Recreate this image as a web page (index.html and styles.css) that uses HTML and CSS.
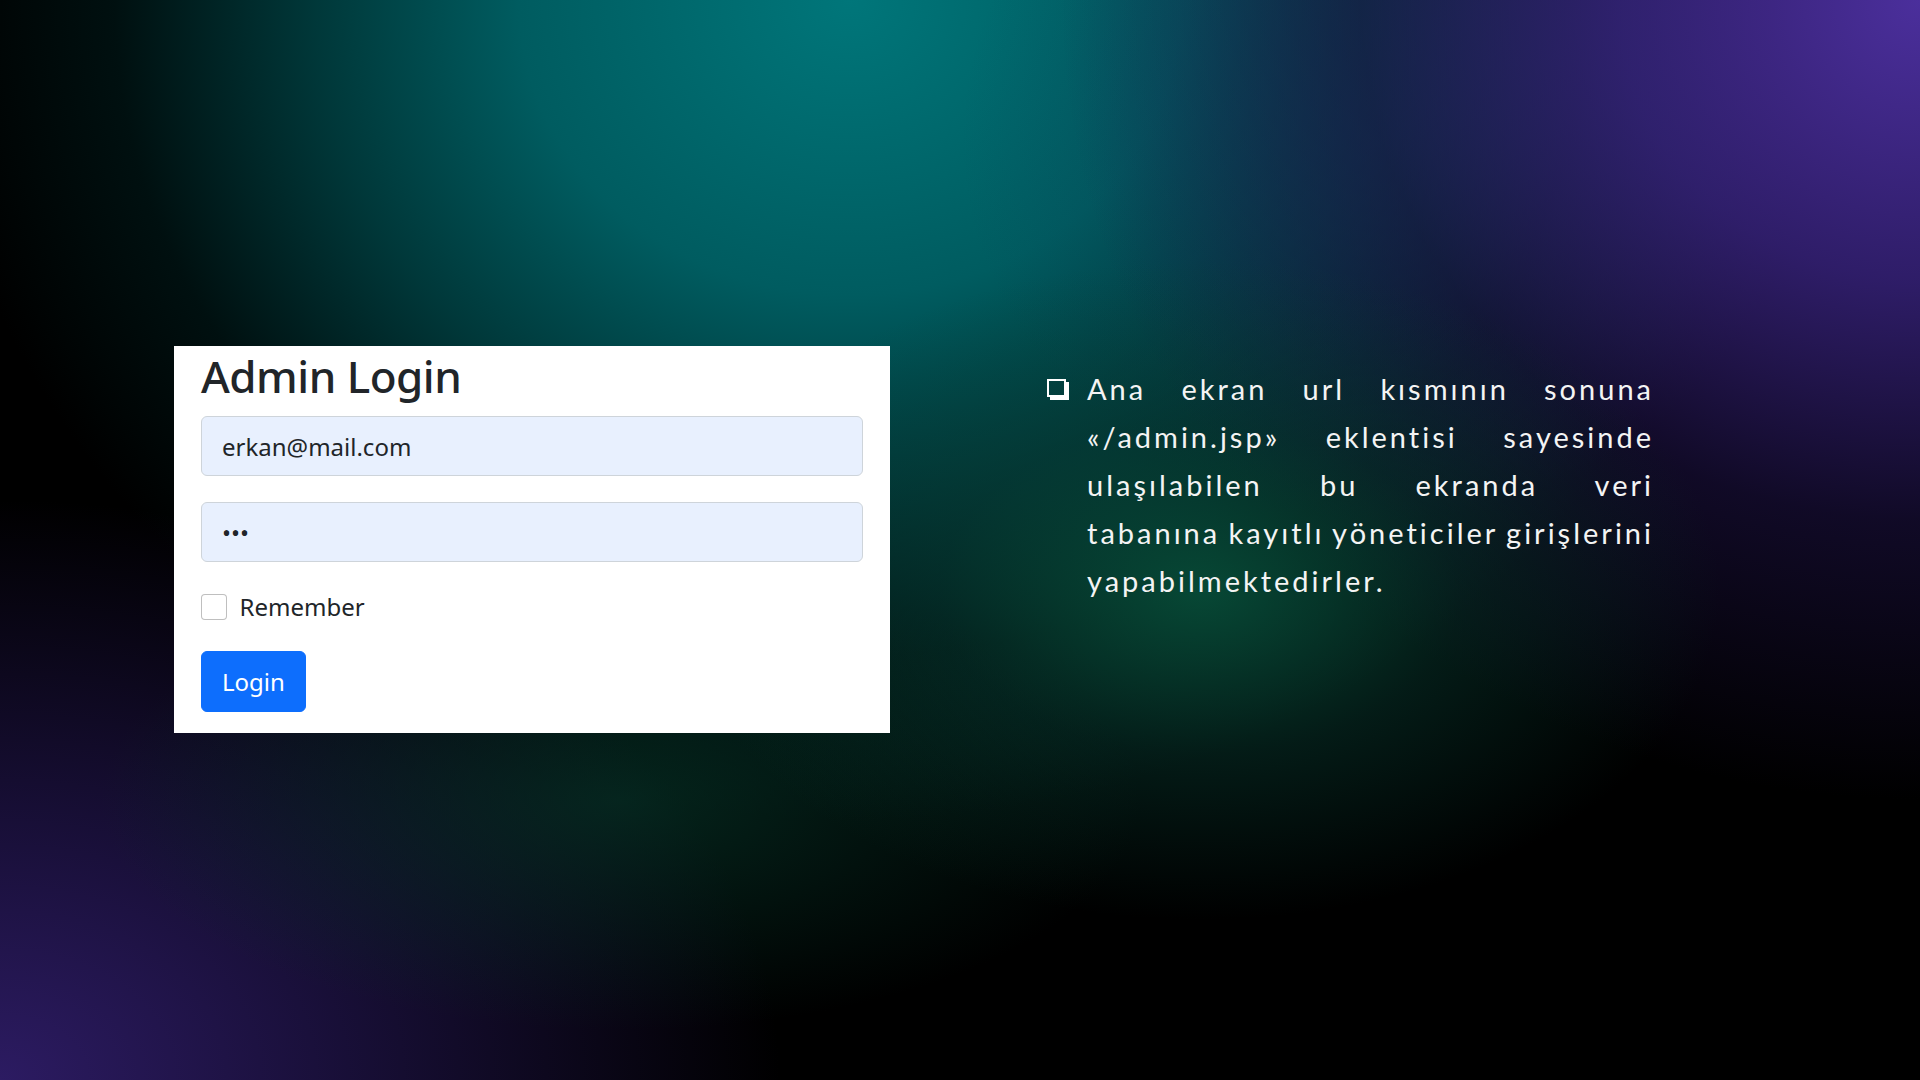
FILE: index.html
```html
<!DOCTYPE html>
<html lang="tr">
<head>
<meta charset="utf-8">
<title>Admin Login</title>
<link rel="stylesheet" href="styles.css">
</head>
<body>
<div class="slide">
  <div class="card">
    <h3 class="title">Admin Login</h3>
    <div class="group"><input class="field" type="text" value="erkan@mail.com"></div>
    <div class="group"><input class="field" type="password" value="abc"></div>
    <div class="check"><input class="box" type="checkbox"><label class="check-label">Remember</label></div>
    <button class="btn">Login</button>
  </div>
  <div class="notes">
    <svg class="bullet" width="23" height="21" viewBox="0 0 23 21">
      <rect x="1" y="1" width="17" height="16" fill="none" stroke="#fff" stroke-width="2"/>
      <polygon points="18,3 22,3 22,21 3,21 3,17 18,17" fill="#fff"/>
    </svg>
    <p class="para">
      <span class="ln">Ana ekran url kısmının sonuna</span>
      <span class="ln">«/admin.jsp» eklentisi sayesinde</span>
      <span class="ln">ulaşılabilen bu ekranda veri</span>
      <span class="ln">tabanına kayıtlı yöneticiler girişlerini</span>
      <span class="ln last">yapabilmektedirler.</span>
    </p>
  </div>
</div>
</body>
</html>
```
FILE: styles.css
```css
html, body {
  margin: 0;
  padding: 0;
}
body {
  width: 1920px;
  height: 1080px;
  overflow: hidden;
  background:
    radial-gradient(ellipse 520px 330px at 1200px 590px, rgba(8, 82, 60, 0.85), rgba(8, 60, 50, 0.45) 50%, transparent 100%),
    radial-gradient(ellipse 520px 230px at 620px 800px, rgba(6, 52, 40, 0.7), transparent 100%),
    radial-gradient(ellipse 860px 800px at 1920px 0px, #4b2f9c 0%, rgba(58, 36, 130, 0.8) 35%, rgba(30, 18, 70, 0.55) 65%, transparent 100%),
    radial-gradient(ellipse 420px 380px at 1380px 140px, rgba(14, 58, 88, 0.55), transparent 100%),
    radial-gradient(ellipse 780px 580px at 0px 1080px, #2c1b62 0%, rgba(34, 21, 78, 0.7) 45%, transparent 100%),
    radial-gradient(ellipse 920px 820px at 850px 0px, #00767a 0%, #005c60 36%, rgba(0, 70, 72, 0.8) 58%, rgba(0, 45, 45, 0.35) 80%, transparent 100%),
    #000;
}
.slide {
  display: flex;
  align-items: flex-start;
  padding: 346px 0 0 174px;
  gap: 157px;
}
.card {
  width: 716px;
  height: 387px;
  box-sizing: border-box;
  background: #fff;
  padding: 4px 27px 0 27px;
  font-family: "Noto Sans", "Open Sans", sans-serif;
  color: #212529;
}
.title {
  margin: 0 0 13.5px 0;
  font-size: 44px;
  font-weight: 500;
  line-height: 1.2;
  letter-spacing: -0.5px;
}
.group {
  margin-bottom: 26px;
}
.field {
  display: block;
  width: 100%;
  height: 60px;
  box-sizing: border-box;
  padding: 0 20px;
  border: 1.6px solid #ced4da;
  border-radius: 6px;
  background: #e8f0fe;
  font-family: "Noto Sans", "Open Sans", sans-serif;
  font-size: 24px;
  color: #212529;
  outline: none;
}
.check {
  display: flex;
  align-items: flex-start;
  height: 38px;
  margin-bottom: 26px;
  margin-top: -1px;
}
.box {
  appearance: none;
  -webkit-appearance: none;
  margin: 7px 13px 0 0;
  width: 25.6px;
  height: 25.6px;
  box-sizing: border-box;
  border: 1.6px solid rgba(0, 0, 0, 0.25);
  border-radius: 4px;
  background: #fff;
}
.check-label {
  font-size: 24px;
  line-height: 40px;
  color: #212529;
}
.btn {
  display: block;
  height: 61px;
  padding: 0 20px;
  border: 1.6px solid #0d6efd;
  border-radius: 6px;
  background: #0d6efd;
  color: #fff;
  font-family: "Noto Sans", "Open Sans", sans-serif;
  font-size: 24px;
}
.notes {
  display: flex;
  align-items: flex-start;
  gap: 17px;
  margin-top: 19px;
}
.bullet {
  display: block;
  flex: none;
  margin-top: 14px;
}
.para {
  margin: 0;
  width: 567px;
  font-family: "Lato", sans-serif;
  font-size: 29px;
  line-height: 48px;
  letter-spacing: 3px;
  word-spacing: -4px;
  color: #f4f4f4;
}
.ln {
  display: block;
  text-align: justify;
  text-align-last: justify;
  white-space: nowrap;
}
.ln.last {
  text-align-last: left;
}
```
